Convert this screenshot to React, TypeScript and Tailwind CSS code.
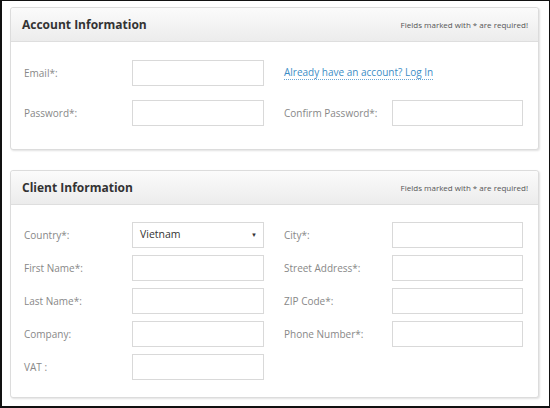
import React from 'react';

type Field = { label: string; select?: string };

const Input: React.FC<{ select?: string; w: string }> = ({ select, w }) => {
  if (select) {
    return (
      <div className={`flex h-[26px] items-center justify-between border border-[#d9d9d9] bg-white pl-[7px] pr-[6px] text-[10.5px] text-[#333] ${w}`}>
        <span>{select}</span>
        <span className="text-[6px] text-[#333]">▼</span>
      </div>
    );
  }
  return <div className={`h-[26px] border border-[#d9d9d9] bg-white ${w}`} />;
};

const Label: React.FC<{ text: string }> = ({ text }) => (
  <div className="flex h-[26px] w-[108px] shrink-0 items-center text-[10px] text-[#888]">{text}</div>
);

const Panel: React.FC<{ title: string; children: React.ReactNode; className?: string }> = ({ title, children, className }) => (
  <section className={`rounded-[3px] border border-[#dcdcdc] bg-white shadow-[1px_1px_2px_rgba(0,0,0,0.12)] ${className ?? ''}`}>
    <header className="flex h-[34px] items-center justify-between rounded-t-[3px] border-b border-[#dedede] bg-gradient-to-b from-[#fbfbfb] to-[#ececec] pl-[11px] pr-[10px]">
      <h2 className="text-[12px] font-bold text-[#333]">{title}</h2>
      <span className="text-[8px] text-[#555]">Fields marked with * are required!</span>
    </header>
    {children}
  </section>
);

const Row: React.FC<{ f: Field; w: string }> = ({ f, w }) => (
  <div className="flex">
    <Label text={f.label} />
    <Input select={f.select} w={w} />
  </div>
);

const clientLeft: Field[] = [
  { label: 'Country*:', select: 'Vietnam' },
  { label: 'First Name*:' },
  { label: 'Last Name*:' },
  { label: 'Company:' },
  { label: 'VAT :' },
];

const clientRight: Field[] = [
  { label: 'City*:' },
  { label: 'Street Address*:' },
  { label: 'ZIP Code*:' },
  { label: 'Phone Number*:' },
];

export default function App() {
  return (
    <div
      className="h-[408px] w-[550px] overflow-hidden border-t border-r border-b-2 border-l-2 border-[#111] bg-white pl-[8px] pt-[6px]"
      style={{ fontFamily: '"Open Sans", "Noto Sans", sans-serif' }}
    >
      <div className="w-[529px]">
        <Panel title="Account Information">
          <div className="flex gap-[20px] pl-[13px] pt-[18px] pb-[23px]">
            <div className="flex flex-col gap-[14px]">
              <Row f={{ label: 'Email*:' }} w="w-[132px]" />
              <Row f={{ label: 'Password*:' }} w="w-[132px]" />
            </div>
            <div className="flex flex-col gap-[14px]">
              <div className="flex h-[26px] items-center">
                <a className="border-b border-dotted border-[#6aa6d3] text-[10px] leading-[13px] text-[#3b8dc6]">
                  Already have an account? Log In
                </a>
              </div>
              <Row f={{ label: 'Confirm Password*:' }} w="w-[131px]" />
            </div>
          </div>
        </Panel>

        <Panel title="Client Information" className="mt-[20px]">
          <div className="flex gap-[20px] pl-[13px] pt-[17px] pb-[17px]">
            <div className="flex flex-col gap-[7px]">
              {clientLeft.map((f) => (
                <Row key={f.label} f={f} w="w-[132px]" />
              ))}
            </div>
            <div className="flex flex-col gap-[7px]">
              {clientRight.map((f) => (
                <Row key={f.label} f={f} w="w-[131px]" />
              ))}
            </div>
          </div>
        </Panel>
      </div>
    </div>
  );
}
